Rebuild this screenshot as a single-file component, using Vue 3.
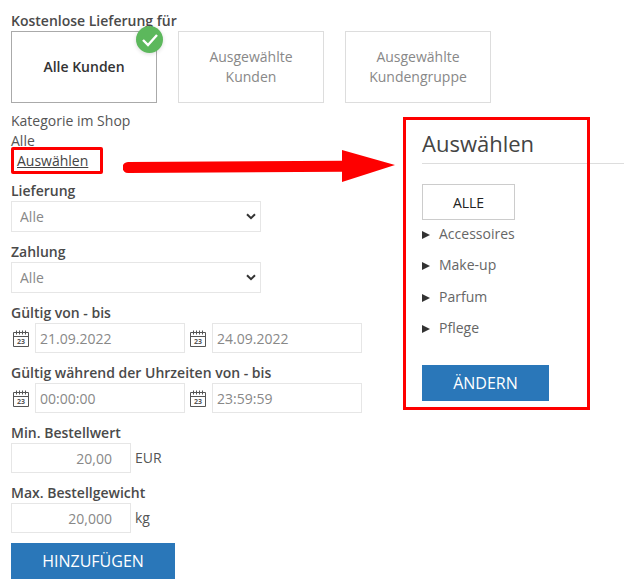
<template>
  <div class="page">
    <div class="label">Kostenlose Lieferung für</div>
    <div class="choices">
      <div
        v-for="choice in choices"
        :key="choice.text"
        class="choice"
        :class="{ active: choice.active }"
      >
        {{ choice.text }}
        <span v-if="choice.active" class="check">
          <svg width="18" height="14" viewBox="0 0 18 14">
            <path d="M2 7 L7 12 L16 2" fill="none" stroke="#fff" stroke-width="2.4" />
          </svg>
        </span>
      </div>
    </div>

    <div class="columns">
      <div class="form">
        <div class="text">Kategorie im Shop</div>
        <div class="text">Alle</div>
        <div class="pick"><a href="#" class="link">Auswählen</a></div>

        <template v-for="name in selects" :key="name">
          <div class="label">{{ name }}</div>
          <div class="select-wrap">
            <select class="field select">
              <option>Alle</option>
            </select>
            <svg class="chevron" width="10" height="7" viewBox="0 0 10 7">
              <path d="M1 1.200 L5 5.200 L9 1.200" fill="none" stroke="#333" stroke-width="2" />
            </svg>
          </div>
        </template>

        <template v-for="range in ranges" :key="range.label">
          <div class="label">{{ range.label }}</div>
          <div class="range">
            <div v-for="value in range.values" :key="value" class="dated">
              <svg class="cal" width="16" height="17" viewBox="0 0 16 17">
                <path
                  d="M0.500 2.500h15v14h-15z M0.500 6.500h15 M3.500 0.500v4 M6.500 0.500v4 M9.500 0.500v4 M12.500 0.500v4"
                  fill="none"
                  stroke="#555"
                  stroke-width="1"
                />
                <text x="8" y="14" text-anchor="middle" class="cal-day">23</text>
              </svg>
              <input class="field date" :value="value" />
            </div>
          </div>
        </template>

        <div class="label">Min. Bestellwert</div>
        <div class="amount">
          <input class="field number" value="20,00" />
          <span class="unit">EUR</span>
        </div>

        <div class="label">Max. Bestellgewicht</div>
        <div class="amount">
          <input class="field number" value="20,000" />
          <span class="unit">kg</span>
        </div>

        <button class="btn add">HINZUFÜGEN</button>
      </div>

      <div class="panel">
        <div class="frame"></div>
        <h2 class="title">Auswählen</h2>
        <button class="all">ALLE</button>
        <ul class="tree">
          <li v-for="cat in categories" :key="cat"><i class="tri"></i>{{ cat }}</li>
        </ul>
        <button class="btn change">ÄNDERN</button>
      </div>
    </div>

    <!-- rote Markierung auf dem Screenshot -->
    <div class="mark"></div>
    <svg class="arrow" width="290" height="40" viewBox="0 0 290 40">
      <path d="M5 16 L219 14.700 L219 4 L272 19 L219 36 L219 25.700 L5 27 A5.500 5.500 0 0 1 5 16 Z" fill="#fe0000" />
    </svg>
  </div>
</template>

<script setup>
const choices = [
  { text: "Alle Kunden", active: true },
  { text: "Ausgewählte Kunden" },
  { text: "Ausgewählte Kundengruppe" },
];

const selects = ["Lieferung", "Zahlung"];

const ranges = [
  { label: "Gültig von - bis", values: ["21.09.2022", "24.09.2022"] },
  { label: "Gültig während der Uhrzeiten von - bis", values: ["00:00:00", "23:59:59"] },
];

const categories = ["Accessoires", "Make-up", "Parfum", "Pflege"];
</script>

<style>
body {
  background: #fff;
}
</style>

<style scoped>
.page {
  position: relative;
  width: 624px;
  height: 579px;
  overflow: hidden;
  padding: 11px 0 0 11px;
  box-sizing: border-box;
  font-family: "Open Sans", sans-serif;
  font-size: 14px;
  line-height: 20px;
  color: #555;
}

.label {
  color: #4a4a4a;
  font-weight: 600;
}

.choices {
  display: flex;
  gap: 21px;
}

.choice {
  position: relative;
  display: flex;
  align-items: center;
  justify-content: center;
  width: 146px;
  height: 72px;
  box-sizing: border-box;
  padding: 0 20px;
  border: 1px solid #ddd;
  text-align: center;
  color: #888;
}

.choice.active {
  border-color: #aaa;
  color: #333;
  font-weight: 600;
}

.check {
  position: absolute;
  top: -6px;
  right: -7px;
  display: flex;
  align-items: center;
  justify-content: center;
  width: 27px;
  height: 27px;
  border-radius: 50%;
  background: #5cb85c;
  box-shadow: 0 1px 4px rgba(0, 0, 0, 0.15);
}

.columns {
  display: flex;
  margin-top: 8px;
}

.form {
  width: 392px;
  flex-shrink: 0;
}

.text {
  color: #555;
}

.pick {
  padding-left: 6px;
  margin-bottom: 10px;
}

.link {
  color: #444;
}

.field {
  display: block;
  box-sizing: border-box;
  border: 1px solid #e6e6e6;
  background: #fff;
  font-family: inherit;
  font-size: 14px;
  color: #888;
  outline: none;
}

.select-wrap {
  position: relative;
  width: 250px;
  margin-bottom: 10px;
}

.select {
  width: 250px;
  height: 31px;
  padding: 0 8px;
  appearance: none;
}

.chevron {
  position: absolute;
  top: 12px;
  right: 5px;
}

.range {
  display: flex;
  gap: 3px;
  margin-bottom: 10px;
}

.dated {
  display: flex;
  align-items: center;
  gap: 8px;
}

.cal {
  flex-shrink: 0;
  margin-left: 2px;
  margin-right: -2px;
}

.cal-day {
  font-family: "Open Sans", sans-serif;
  font-size: 7px;
  font-weight: 700;
  fill: #555;
}

.date {
  width: 150px;
  height: 30px;
  padding: 0 4px;
}

.amount {
  display: flex;
  align-items: center;
  gap: 4px;
  margin-bottom: 10px;
}

.number {
  width: 120px;
  height: 30px;
  padding: 0 18px 0 4px;
  text-align: right;
}

.unit {
  color: #555;
}

.btn {
  display: block;
  border: none;
  background: #2a77b9;
  color: #fff;
  font-family: inherit;
  font-size: 16px;
  padding: 0;
  height: 36px;
}

.add {
  width: 164px;
}

.panel {
  position: relative;
  width: 202px;
  margin-top: 6px;
  margin-left: 19px;
  flex-shrink: 0;
}

.frame {
  position: absolute;
  top: 0;
  left: -19px;
  width: 187px;
  height: 293px;
  box-sizing: border-box;
  border: 3px solid #fe0000;
  pointer-events: none;
}

.title {
  margin: 0;
  padding-top: 11px;
  height: 47px;
  box-sizing: border-box;
  border-bottom: 1px solid #ddd;
  font-size: 22px;
  font-weight: 400;
  line-height: 30px;
  color: #444;
}

.all {
  display: block;
  width: 93px;
  height: 36px;
  margin-top: 20px;
  border: 1px solid #ccc;
  background: #fff;
  font-family: inherit;
  font-size: 14px;
  color: #222;
}

.tree {
  list-style: none;
  margin: 4px 0 0;
  padding: 0;
  height: 134px;
}

.tree li {
  display: flex;
  height: 31.330px;
  color: #666;
}

.tri {
  width: 0;
  height: 0;
  margin: 7px 9px 0 0;
  border-left: 8px solid #333;
  border-top: 4px solid transparent;
  border-bottom: 4px solid transparent;
}

.change {
  width: 127px;
  margin-top: 7px;
}

.mark {
  position: absolute;
  top: 147px;
  left: 11px;
  width: 92px;
  height: 27px;
  box-sizing: border-box;
  border: 3px solid #fe0000;
  border-radius: 2px;
}

.arrow {
  position: absolute;
  top: 146px;
  left: 123px;
}
</style>
